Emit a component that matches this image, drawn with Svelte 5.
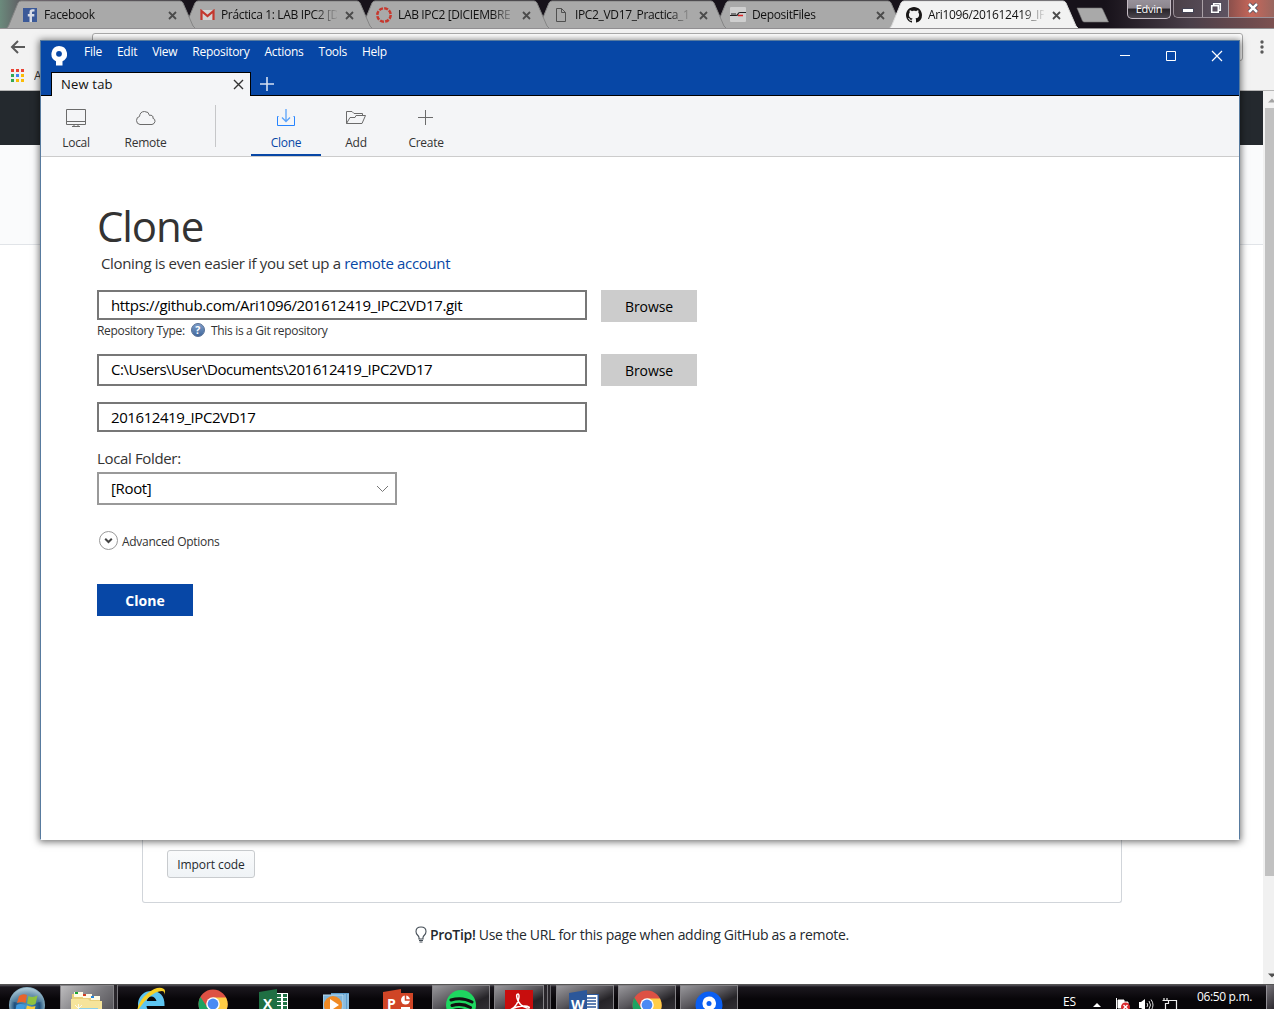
<script>
  const tabs = [
    { icon: 'facebook', title: 'Facebook' },
    { icon: 'gmail', title: 'Práctica 1: LAB IPC2 [D' },
    { icon: 'canvas', title: 'LAB IPC2 [DICIEMBRE' },
    { icon: 'file', title: 'IPC2_VD17_Practica_1' },
    { icon: 'deposit', title: 'DepositFiles' },
    { icon: 'github', title: 'Ari1096/201612419_IP', active: true }
  ];
  const menus = ['File', 'Edit', 'View', 'Repository', 'Actions', 'Tools', 'Help'];
  const appColors = ['#ea4335', '#ea4335', '#ea4335', '#34a853', '#4285f4', '#fbbc05', '#34a853', '#fbbc05', '#fbbc05'];
</script>

{#snippet chromeLogo()}
  <svg width="30" height="30" viewBox="0 0 30 30">
    <circle cx="15" cy="15" r="14.5" fill="#dd5144" />
    <path d="M2.4 7.8A14.5 14.5 0 0 0 13 29.4L20 18 15 15 9 18Z" fill="#1da362" />
    <path d="M15 8.5h13a14.5 14.5 0 0 1-15 20.9l7-11.4Z" fill="#ffcd46" />
    <circle cx="15" cy="15" r="6.8" fill="#fff" />
    <circle cx="15" cy="15" r="5.4" fill="#4a8af4" />
  </svg>
{/snippet}

{#snippet office(letter, color, kind)}
  <svg width="32" height="30" viewBox="0 0 32 30">
    {#if kind === 'x'}
      <path d="M14 4h15v26H14Z" fill="#fff" />
      <path d="M18 5h4v3h-4zM24 5h4v3h-4zM18 9h4v3h-4zM24 9h4v3h-4zM18 13h4v3h-4zM24 13h4v3h-4zM18 17h4v3h-4zM24 17h4v3h-4z" fill="#207245" />
    {:else if kind === 'w'}
      <path d="M14 4h16v26H14Z" fill="#2b579a" />
      <path d="M17 5h11.500v24H17Z" fill="#fff" />
      <path d="M17 8h10M17 11h10M17 14h10M17 17h10M17 20h10" stroke="#2b579a" stroke-width="1.400" />
    {:else}
      <path d="M14 4h16v26H14Z" fill={color} />
      <circle cx="22.500" cy="11" r="4.500" fill="#fff" />
      <path d="M22.500 6v5h5" stroke={color} stroke-width="1.500" fill="none" />
      <path d="M18 18h9v2h-9Z" fill="#fff" />
    {/if}
    <path d="M0 3 18 0v30H0Z" fill={color} />
    <text x={kind === 'w' ? 2 : 4} y="19.500" font-size="14" font-weight="700" fill="#fff">{letter}</text>
  </svg>
{/snippet}

{#snippet treeLogo(hole)}
  <svg width="16" height="20" viewBox="0 0 16 20">
    <path d="M8 0a8 8 0 0 1 3.500 15.200V19.500h-6.500v-4.300A8 8 0 0 1 8 0Z" fill="#fff" />
    <circle cx="8" cy="7.800" r="2.900" fill={hole} />
  </svg>
{/snippet}

<div class="desktop">
  <header class="strip">
    <div class="tabs">
      {#each tabs as tab}
        <div class="tab" class:active={tab.active}>
          <svg class="shape" width="190" height="29" viewBox="0 0 190 29">
            <path d="M0.500 28.500 2.500 26 12 3Q13 1 15 1H174Q176 1 177 3L187 26 189.500 28.500" />
          </svg>
          <span class="fav">
            {#if tab.icon === 'facebook'}
              <svg width="14" height="14"><rect width="14" height="14" fill="#3b5998" /><path d="M9 14V8.500h2.300V6H9V4.500q0-1 1-1h1.500V1.300H9.300Q6.500 1.300 6.500 4v2H4.800v2.500h1.700V14Z" fill="#d8dce6" /></svg>
            {:else if tab.icon === 'gmail'}
              <svg width="15" height="12"><path d="M1 1h13v10H1Z" fill="#d2d2d2" /><path d="M1.500 11V2l6 5 6-5v9" fill="none" stroke="#c4372d" stroke-width="2.200" /></svg>
            {:else if tab.icon === 'canvas'}
              <svg width="16" height="16"><circle cx="8" cy="8" r="6.700" fill="none" stroke="#c6382e" stroke-width="2.500" stroke-dasharray="4 1.262" /></svg>
            {:else if tab.icon === 'file'}
              <svg width="14" height="14"><path d="M2.500.500h5l4 4v9h-9ZM7.500.500v4h4" fill="none" stroke="#505050" /></svg>
            {:else if tab.icon === 'deposit'}
              <svg width="16" height="16"><rect width="16" height="15" rx="1" fill="#cfcfcf" /><path d="M0 8.500h6q1.500 0 2-1.500t2-1.500h6M1 7h5" fill="none" stroke="#222" stroke-width="1.200" /><path d="M8 8.500h5" stroke="#d22" stroke-width="1.500" /></svg>
            {:else}
              <svg width="16" height="16" viewBox="0 0 16 16"><path fill="#181616" d="M8 0C3.580 0 0 3.580 0 8c0 3.540 2.290 6.530 5.470 7.590.4.070.55-.17.55-.38 0-.19-.01-.82-.01-1.490-2.010.37-2.530-.49-2.690-.94-.09-.23-.48-.94-.82-1.130-.28-.15-.68-.52-.01-.53.63-.01 1.080.58 1.230.82.72 1.210 1.870.87 2.330.66.07-.52.28-.87.51-1.070-1.780-.2-3.640-.89-3.640-3.950 0-.87.31-1.590.82-2.150-.08-.2-.36-1.020.08-2.120 0 0 .67-.21 2.200.82.64-.18 1.320-.27 2-.27s1.360.09 2 .27c1.530-1.040 2.200-.82 2.200-.82.44 1.100.16 1.920.08 2.120.51.56.82 1.270.82 2.150 0 3.070-1.870 3.750-3.650 3.950.29.25.54.73.54 1.480 0 1.070-.01 1.930-.01 2.200 0 .21.15.46.55.38A8.010 8.010 0 0 0 16 8c0-4.420-3.580-8-8-8Z" /></svg>
            {/if}
          </span>
          <span class="tab-title">{tab.title}</span>
          <svg class="tab-x" width="9" height="9"><path d="m1 1 7 7M8 1 1 8" stroke="#4b4b4b" stroke-width="1.800" /></svg>
        </div>
      {/each}
    </div>
    <svg class="new-tab" width="34" height="17"><path d="M1 1h24q1 0 1.500 1L32.500 15H8.500Q7 15 6.500 14Z" fill="#a9a9a9" stroke="#777" stroke-width=".6" /></svg>
    <div class="user">Edvin</div>
    <div class="win-controls">
      <span class="min"><svg width="12" height="5"><rect x=".5" y=".5" width="11" height="4" fill="#fff" stroke="#445" /></svg></span>
      <span><svg width="12" height="12"><path d="M3.700 3V1.700h6.600v6.600H9M1.700 3.700h6.600v6.600H1.700Z" fill="none" stroke="#445" stroke-width="2.600" /><path d="M3.700 3V1.700h6.600v6.600H9M1.700 3.700h6.600v6.600H1.700Z" fill="none" stroke="#fff" stroke-width="1.600" /></svg></span>
      <span class="close"><svg width="14" height="12"><path d="m3 2 8 8M11 2l-8 8" stroke="#445" stroke-width="4" /><path d="m3 2 8 8M11 2l-8 8" stroke="#fff" stroke-width="2.500" /></svg></span>
    </div>
  </header>

  <div class="bar">
    <div class="nav">
      <svg width="16" height="14"><path d="M15 7H2M8 1 2 7l6 6" fill="none" stroke="#5a5a5a" stroke-width="2" /></svg>
      <div class="omnibox"></div>
      <svg class="dots" width="4" height="14"><circle cx="2" cy="2" r="1.700" /><circle cx="2" cy="7" r="1.700" /><circle cx="2" cy="12" r="1.700" /></svg>
    </div>
    <div class="bookmarks">
      <div class="apps">
        {#each appColors as color}<i style:background={color}></i>{/each}
      </div>
      <span>A</span>
    </div>
  </div>

  <main class="page">
    <div class="doc">
      <div class="gh-head"></div>
      <div class="gh-repo"></div>
      <div class="gh-box"><button class="import">Import code</button></div>
      <p class="protip">
        <svg width="12" height="17" viewBox="0 0 12 17"><path d="M4 13v-1.500Q4 10.500 2.500 9 1 7.500 1 5.500 1 1 6 1t5 4.500q0 2-1.500 3.500Q8 10.500 8 11.500V13Z" fill="none" stroke="#444d56" stroke-width="1.100" /><path d="M4 14.500h4M4.500 16h3" stroke="#444d56" /></svg>
        <span><b>ProTip!</b> Use the URL for this page when adding GitHub as a remote.</span>
      </p>
    </div>
    <div class="scroll">
      <svg width="8" height="5"><path d="M0 4.500 4 .500l4 4Z" fill="#a3a3a3" /></svg>
      <div class="thumb"></div>
      <svg width="8" height="5"><path d="M0 .500h8l-4 4Z" fill="#505050" /></svg>
    </div>
  </main>

  <footer class="taskbar">
    <div class="slot orb">
      <svg width="38" height="34" viewBox="0 0 38 34">
        <defs><radialGradient id="orb" cx=".5" cy=".55"><stop offset="0" stop-color="#4f9fd0" /><stop offset=".7" stop-color="#1f4f7c" /><stop offset="1" stop-color="#82a9bd" /></radialGradient><linearGradient id="shine" x2="0" y2="1"><stop offset="0" stop-color="#c3d8e2" /><stop offset="1" stop-color="#4d7f9f" /></linearGradient></defs>
        <circle cx="19" cy="19" r="18" fill="url(#orb)" />
        <path d="M2 15a17.500 17.500 0 0 1 34 0Q19 20 2 15Z" fill="url(#shine)" opacity=".7" />
        <path d="M11 10q4-3 8-1l-1.500 8q-4-2-8.500 0Z" fill="#e8642c" /><path d="M20.500 10q4 2 9-.5L27.500 18q-4 2-8.500-.5Z" fill="#8fc23f" />
        <path d="M8.500 19q4-2 8.500 0l-2 8q-4-2-8 0Z" fill="#3f9be0" /><path d="M19 19.500q4 2 8.500.5l-2 8q-4 2-8.500-.5Z" fill="#f9cb36" />
      </svg>
    </div>
    <div class="slot open explorer">
      <svg width="34" height="26" viewBox="0 0 34 26"><path d="M2 3h12l2 2h14v5h2v16H1V8h1Z" fill="#e9cf79" /><path d="M4 1h9v5H4ZM13 3h9v4h-9ZM21 5h9v4h-9Z" fill="#fffbe6" /><path d="M5 1h3v2H5Z" fill="#1aa531" /><path d="M13 3h3v2h-3Z" fill="#d33d22" /><path d="M21 5h3v2h-3Z" fill="#2684d8" /><path d="M1 8h17l2 2h12v16H1Z" fill="#f6e49b" /><path d="M8 17h20v9H8Z" fill="#8ed0e8" /><path d="m5 14 7 7M12 14l-7 7M8.500 13v9" stroke="#fff" opacity=".8" /></svg>
    </div>
    <div class="slot ie">
      <svg width="32" height="28" viewBox="0 0 32 28"><path d="M16 4A13 13 0 1 0 28 22h-7q-2 2.500-5 2-4-.5-4.500-5H29.500Q30 4 16 4Zm-4.300 10Q13 9.500 16.500 9.500T21.500 14Z" fill="#5dc4f0" /><path d="M2 25Q3 14 13 6T29 2q2 1.500 0 6 1-4-2-4-6 0-13 6T2 25Z" fill="#f7cf25" /></svg>
    </div>
    <div class="slot">{@render chromeLogo()}</div>
    <div class="slot">{@render office('X', '#1f6f43', 'x')}</div>
    <div class="slot wmp">
      <svg width="28" height="26" viewBox="0 0 28 26"><path d="M8 0h18v26H8Z" fill="#5f9fce" /><path d="M0 2h20v24H0Z" fill="#7fb5da" stroke="#bcdcf0" /><path d="M22 1v25M25 1v25" stroke="#b5d8ee" /><circle cx="10" cy="12" r="9" fill="#f08a24" /><path d="m7 6 9 6-9 6Z" fill="#fff" /></svg>
    </div>
    <div class="slot">{@render office('P', '#d04526', 'p')}</div>
    <div class="slot open first">
      <svg width="32" height="30" viewBox="0 0 32 30"><circle cx="16" cy="15" r="15" fill="#1ed760" /><path d="M6 10q11-3.500 21 2M7 15.500q10-3 18.500 2M8 20.500q8-2.500 15.500 2" fill="none" stroke="#111" stroke-width="3" stroke-linecap="round" /></svg>
    </div>
    <div class="slot open adobe">
      <svg width="28" height="30" viewBox="0 0 28 30"><rect width="28" height="30" fill="#c80d0d" /><path d="M5 20q8-4 9-13 0-3-1-3-2 0-1 4 2 8 10 10 3 .5 2-1-3-2-12 0-7 2-7 4Z" fill="none" stroke="#fff" stroke-width="1.500" /></svg>
    </div>
    <div class="slot open">{@render office('W', '#2b579a', 'w')}</div>
    <div class="slot open">{@render chromeLogo()}</div>
    <div class="slot open tree">
      <svg width="28" height="28" viewBox="0 0 28 28"><circle cx="14" cy="14" r="13.500" fill="#0b5ff2" /><path d="M14 5.500a7 7 0 0 1 3 13.300V25h-5.500v-6.200A7 7 0 0 1 14 5.500Z" fill="#fff" /><circle cx="14" cy="12.500" r="2.500" fill="#0b5ff2" /></svg>
    </div>
    <div class="tray">
      <span class="lang">ES</span>
      <svg class="up" width="8" height="4"><path d="M0 4 4 0l4 4Z" fill="#fff" /></svg>
      <svg class="flag" width="16" height="16"><path d="M1.500 1v15M3 3h6v2h4v6H3Z" stroke="#fff" fill="#fff" /><circle cx="10.500" cy="10" r="4.500" fill="#d8282c" /><path d="m8.500 8 4 4M12.500 8l-4 4" stroke="#fff" stroke-width="1.300" /></svg>
      <svg class="sound" width="15" height="14"><path d="M0 4h2l4-3v12L2 10H0Z" fill="#fff" /><path d="M8 5q1.500 2 0 4M10 3q3 4 0 8M12 1.500q4 5.500 0 11" fill="none" stroke="#ddd" /></svg>
      <svg class="net" width="16" height="14"><path d="M2 0v3M5 0v3M.500 2.500h6v3h-3V13M6 2.500h8.500V12" fill="none" stroke="#eee" stroke-width="1.200" /></svg>
      <span class="clock">06:50 p.m.</span>
      <span class="peek"></span>
    </div>
  </footer>

  <section class="window">
    <div class="title">
      <div class="title-row">
        <span class="logo">{@render treeLogo('#0747a6')}</span>
        <nav>{#each menus as item}<span>{item}</span>{/each}</nav>
        <div class="controls">
          <svg width="12" height="12"><path d="M1 5.500h10" stroke="#fff" /></svg>
          <svg width="12" height="12"><path d="M1.500 1.500h9v9h-9Z" fill="none" stroke="#fff" /></svg>
          <svg width="12" height="12"><path d="m1 1 10 10M11 1 1 11" stroke="#fff" stroke-width="1.200" /></svg>
        </div>
      </div>
      <div class="doc-tabs">
        <div class="doc-tab">
          <span>New tab</span>
          <svg width="11" height="11"><path d="m1 1 9 9M10 1l-9 9" stroke="#333" stroke-width="1.400" /></svg>
        </div>
        <svg class="plus" width="14" height="14"><path d="M7 0v14M0 7h14" stroke="#d5e0f2" stroke-width="1.600" /></svg>
      </div>
    </div>

    <div class="tools">
      <div class="tool"><svg width="22" height="20"><path d="M1.500 1.500h19v15h-19ZM1 13.500h20M9 16.500v2M13 16.500v2M7 18.500h8" fill="none" stroke="#6b6b6b" /></svg>Local</div>
      <div class="tool remote"><svg width="22" height="20"><path d="M5 16.500Q1.500 16 1.500 12.500T4.500 8.500Q5 3.500 9.500 3.500T14.500 7.500Q16 6.500 17.500 8T17.500 10Q20.500 11 20 13.500T17 16.500Z" fill="none" stroke="#6b6b6b" /></svg>Remote</div>
      <i class="divider"></i>
      <div class="tool selected"><svg width="22" height="20"><path d="M3.500 8.500H2.500v9h17v-9h-1" fill="none" stroke="#2684ff" /><path d="M11 1v12M7 9.500l4 4 4-4" fill="none" stroke="#5aa2fa" stroke-width="1.300" /></svg>Clone</div>
      <div class="tool"><svg width="22" height="20"><path d="M1.500 15.500v-12H7l2 2h8.500v2M1.500 15.500l3.500-6h5l1-2h9.500l-3.500 8Z" fill="none" stroke="#6b6b6b" /></svg>Add</div>
      <div class="tool"><svg width="22" height="20"><path d="M10.500 2v15M3 9.500h15" stroke="#6b6b6b" /></svg>Create</div>
    </div>

    <div class="form">
      <h1>Clone</h1>
      <p class="hint">Cloning is even easier if you set up a <a href="#remote">remote account</a></p>
      <div class="row"><div class="field url">https://github.com/Ari1096/201612419_IPC2VD17.git</div><button class="browse">Browse</button></div>
      <div class="type">
        <span>Repository Type:</span>
        <svg width="14" height="15"><defs><linearGradient id="help" x2="0" y2="1"><stop offset="0" stop-color="#7f9fca" /><stop offset="1" stop-color="#3f669b" /></linearGradient></defs><circle cx="7" cy="7" r="6.500" fill="url(#help)" stroke="#5b7297" /><text x="4.200" y="11" font-size="10.500" font-weight="700" fill="#fff">?</text></svg>
        <span>This is a Git repository</span>
      </div>
      <div class="row second"><div class="field path">C:\Users\User\Documents\201612419_IPC2VD17</div><button class="browse">Browse</button></div>
      <div class="field name">201612419_IPC2VD17</div>
      <div class="label">Local Folder:</div>
      <div class="field select"><span>[Root]</span><svg width="13" height="8"><path d="m1 1 5.500 5.500L12 1" fill="none" stroke="#777" /></svg></div>
      <div class="advanced">
        <svg width="19" height="19"><circle cx="9.500" cy="9.500" r="9" fill="#fff" stroke="#999" /><path d="M6.200 7.800 9.500 11l3.300-3.200" fill="none" stroke="#444" stroke-width="2" /></svg>
        <span>Advanced Options</span>
      </div>
      <button class="primary">Clone</button>
    </div>
  </section>
</div>

<style>
  :global(body) { margin: 0; background: #fff; overflow: hidden; }
  .desktop, .desktop * { box-sizing: border-box; }
  .desktop { position: relative; width: 1274px; height: 1009px; overflow: hidden; display: flex; flex-direction: column; font: 12px/16px "Open Sans", "Noto Sans", sans-serif; letter-spacing: -0.28px; color: #333; }
  svg { display: block; flex: none; }
  button { font: inherit; letter-spacing: inherit; border: 0; padding: 0; }
  p, h1 { margin: 0; }

  .strip { display: flex; flex: none; height: 29px; background: linear-gradient(90deg, #6b8a7c, #5a4a58 30px, #17121a 190px, #17121a 1105px, #4a3f49 1190px, #7c5050 1274px); border-bottom: 1px solid #918f92; overflow: hidden; }
  .tabs { display: flex; padding-left: 6px; height: 29px; }
  .tab { position: relative; width: 190px; height: 29px; margin-right: -13px; display: flex; align-items: center; padding: 1px 16px 0 16px; flex: none; color: #111; }
  .tab:nth-child(1) { z-index: 5; }
  .tab:nth-child(2) { z-index: 4; }
  .tab:nth-child(3) { z-index: 3; }
  .tab:nth-child(4) { z-index: 2; }
  .tab:nth-child(5) { z-index: 1; }
  .tab.active { z-index: 6; margin-left: -2px; padding-left: 17px; }
  .shape { position: absolute; left: 0; top: 0; fill: #a9a9a9; stroke: #858585; }
  .active .shape { fill: #f2f2f2; stroke: #d8d8d8; }
  .fav { position: relative; width: 16px; display: flex; justify-content: center; }
  .tab-title { position: relative; margin-left: 6px; width: 116px; overflow: hidden; white-space: nowrap; letter-spacing: -0.35px; mask-image: linear-gradient(90deg, #000 94px, transparent 118px); }
  .tab-x { position: relative; margin-left: 8px; }
  .new-tab { margin: 7px 0 0 10px; }
  .user { margin-left: 17px; width: 45px; height: 19px; border: 1px solid #c5bcc4; border-top: 0; border-radius: 0 0 5px 5px; background: linear-gradient(#97919a, #8b858d 45%, #262228 50%, #4b464e); color: #fff; font-size: 11px; text-align: center; line-height: 18px; }
  .win-controls { display: flex; margin-left: 2px; width: 101px; height: 18px; border: 1px solid #9c9199; border-top: 0; border-right: 0; border-radius: 0 0 0 5px; background: linear-gradient(90deg, #4b4048, #6d6377); }
  .win-controls span { width: 27px; display: flex; align-items: center; justify-content: center; padding-bottom: 1px; border-right: 1px solid #aaa1a7; }
  .win-controls .min { width: 29px; padding: 3px 0 0 1px; }
  .win-controls .close { width: 45px; padding: 0 0 2px 2px; background: linear-gradient(90deg, #8b504c, #c7675a 50%, #98665f); border: 0; }

  .bar { flex: none; height: 62px; background: #f2f2f2; border-bottom: 1px solid #b5b5b5; }
  .nav { display: flex; padding: 4px 10px 0 10px; height: 36px; }
  .nav > svg { margin-top: 7px; }
  .omnibox { margin-left: 66px; width: 1152px; height: 28px; background: #fff; border: 1px solid #aaa; border-radius: 3px; }
  .nav > .dots { margin-left: 17px; fill: #5a5a5a; }
  .bookmarks { display: flex; align-items: center; height: 21px; padding-left: 11px; }
  .bookmarks > span { width: 6px; overflow: hidden; }
  .apps { display: grid; grid-template-columns: repeat(3, 3px); gap: 2px; margin-right: 10px; }
  .apps i { height: 3px; }

  .page { display: flex; flex: 1; min-height: 0; }
  .doc { width: 1263px; height: 893px; }
  .gh-head { height: 54px; background: #24292e; }
  .gh-repo { height: 100px; background: #fafbfc; border-bottom: 1px solid #e1e4e8; }
  .gh-box { margin-left: 142px; width: 980px; height: 658px; border: 1px solid #d1d5da; border-top: 0; border-radius: 0 0 3px 3px; display: flex; align-items: flex-end; padding: 0 24px 24px; }
  .import { width: 88px; height: 28px; padding-top: 2px; border: 1px solid #c8cbce; border-radius: 3px; background: linear-gradient(#fafbfc, #eff3f6); color: #24292e; letter-spacing: -0.1px; }
  .protip { display: flex; align-items: center; gap: 3px; margin: 21px 0 0 415px; height: 20px; font-size: 14px; letter-spacing: -0.3px; color: #24292e; white-space: nowrap; }
  .protip b { font-weight: 600; }
  .protip span { padding-top: 1px; }
  .scroll { width: 11px; background: #f1f1f1; display: flex; flex-direction: column; padding: 7px 0 6px 2px; }
  .scroll svg { margin-left: 3px; }
  .thumb { width: 9px; height: 768px; margin: 5px 0 auto; background: #c1c1c1; }

  .taskbar { flex: none; display: flex; height: 25px; border-top: 1px solid #555; background: linear-gradient(#55525a, #1b181e 2px, #080609 14px); overflow: hidden; font-size: 12px; }
  .slot { flex: none; width: 62px; height: 34px; display: flex; justify-content: center; padding-top: 4px; }
  .slot text { font-family: "Open Sans", sans-serif; letter-spacing: 0; }
  .orb { width: 54px; padding-top: 1px; }
  .open { width: 58px; margin-right: 4px; border: 1px solid #858387; background: linear-gradient(155deg, #98979b, #58565b 40%, #252327 62%, #3a383d); }
  .explorer { width: 54px; margin-left: 6px; margin-right: 6px; padding-top: 5px; background: linear-gradient(135deg, #bdbcbe, #77767a 55%, #4d4b50); box-shadow: 3px 0 #29262b, 4px 0 #77757a; }
  .ie { padding-top: 2px; }
  .wmp { padding-top: 8px; }
  .first { margin-left: 2px; }
  .adobe { width: 50px; margin-right: 12px; box-shadow: 3px 0 #29262b, 4px 0 #77757a, 6px 0 #29262b, 7px 0 #666469; }
  .tree { padding-top: 5px; }
  .tray { display: flex; align-items: flex-start; margin-left: auto; color: #fff; }
  .lang { margin-top: 9px; width: 30px; }
  .up { margin-top: 18px; width: 8px; }
  .flag { margin: 12px 0 0 14px; }
  .sound { margin: 13px 0 0 8px; }
  .net { margin: 13px 0 0 8px; }
  .clock { margin: 4px 0 0 19px; width: 69px; letter-spacing: -0.35px; }
  .peek { width: 8px; height: 25px; border-left: 1px solid #918e94; background: linear-gradient(135deg, #77747a, #29262c); }

  .window { position: absolute; left: 40px; top: 40px; width: 1200px; height: 800px; display: flex; flex-direction: column; border: 1px solid #587b9f; border-bottom-color: #fff; background: #fff; box-shadow: 0 1px 7px 1px rgba(0, 0, 0, .55); }
  .title { flex: none; height: 55px; background: #0747a6; border-bottom: 1px solid #000; }
  .title-row { display: flex; height: 31px; }
  .logo { margin: 5px 0 0 10px; width: 33px; }
  nav { display: flex; gap: 15px; color: #fff; margin-top: 3px; letter-spacing: -0.27px; }
  .controls { display: flex; gap: 34px; margin: 9px 16px 0 auto; }
  .doc-tabs { display: flex; height: 24px; }
  .doc-tab { margin-left: 10px; width: 200px; height: 24px; display: flex; align-items: center; justify-content: space-between; padding: 0 6px 0 9px; background: #f4f5f7; border: 1px solid #000; border-bottom: 0; color: #111; font-size: 13px; letter-spacing: 0.2px; }
  .doc-tab span { height: 18px; }
  .plus { margin: 5px 0 0 9px; }
  .tools { flex: none; display: flex; height: 61px; background: #f4f5f7; border-bottom: 1px solid #ccc; }
  .tool { width: 70px; height: 60px; padding-top: 12px; display: flex; flex-direction: column; align-items: center; gap: 7px; }
  .remote { width: 69px; margin-right: 1px; }
  .selected { color: #0747a6; border-bottom: 2px solid #0747a6; }
  .divider { width: 1px; height: 42px; margin: 9px 35px 0 34px; background: #c6c7c9; }

  .form { padding: 39px 56px 0; display: flex; flex-direction: column; font-size: 15px; line-height: 20px; letter-spacing: -0.35px; }
  h1 { font-size: 42px; line-height: 60px; height: 57px; font-weight: 400; letter-spacing: -1.1px; }
  .hint { margin-left: 4px; height: 21px; letter-spacing: -0.34px; }
  .hint a { color: #0747a6; text-decoration: none; }
  .row { display: flex; gap: 14px; margin-top: 16px; height: 32px; }
  .field { width: 490px; height: 30px; border: 2px solid #777; padding: 0 12px; display: flex; align-items: center; color: #000; white-space: nowrap; letter-spacing: -0.34px; }
  .browse { width: 96px; height: 32px; padding-top: 1px; background: #ccc; color: #000; font-size: 14px; letter-spacing: -0.1px; }
  .type { display: flex; gap: 6px; align-items: center; height: 18px; font-size: 12px; letter-spacing: -0.31px; }
  .type svg { margin-top: -1px; }
  .second { margin-top: 14px; }
  .path { height: 32px; padding-bottom: 2px; letter-spacing: -0.45px; }
  .name { margin-top: 16px; letter-spacing: -0.42px; }
  .label { margin-top: 16px; height: 24px; }
  .select { width: 300px; height: 33px; border-color: #999; justify-content: space-between; padding-right: 6px; }
  .select span { padding-bottom: 2px; }
  .advanced { display: flex; gap: 4px; height: 20px; margin: 26px 0 0 2px; font-size: 12px; letter-spacing: -0.3px; }
  .advanced span { padding-top: 1px; }
  .primary { margin-top: 33px; width: 96px; height: 32px; padding-top: 1px; background: #0747a6; color: #fff; font-size: 14px; letter-spacing: 0; font-weight: 700; }
</style>
